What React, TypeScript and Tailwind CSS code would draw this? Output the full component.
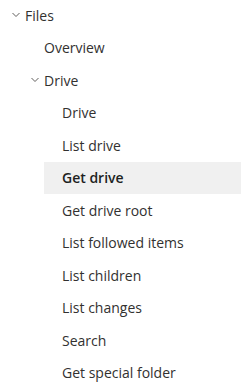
function Chevron() {
  return (
    <svg width="8" height="6" viewBox="0 0 8 6" className="shrink-0">
      <path d="M0.5 1 L4 4.5 L7.5 1" fill="none" stroke="#605e5c" strokeWidth="1" />
    </svg>
  );
}

function Row({
  label,
  indent,
  chevron,
  active,
}: {
  label: string;
  indent: string;
  chevron?: boolean;
  active?: boolean;
}) {
  return (
    <div className={`h-[32.5px] flex items-center ${indent}`}>
      {chevron ? (
        <div className="flex items-center gap-[5px]">
          <Chevron />
          <span>{label}</span>
        </div>
      ) : (
        <span>{label}</span>
      )}
    </div>
  );
}

export default function App() {
  const leaves = [
    "Drive",
    "List drive",
    "Get drive",
    "Get drive root",
    "List followed items",
    "List children",
    "List changes",
    "Search",
    "Get special folder",
  ];
  return (
    <div
      className="w-[241px] h-[389px] overflow-hidden bg-white text-[14px] text-[#323130]"
      style={{ fontFamily: '"Open Sans", sans-serif' }}
    >
      <div className="-mt-[1px] flex flex-col">
        <Row label="Files" indent="pl-[12px]" chevron />
        <Row label="Overview" indent="pl-[44px]" />
        <Row label="Drive" indent="pl-[31px]" chevron />
        <div className="ml-[44px] flex flex-col">
          {leaves.map((l) =>
            l === "Get drive" ? (
              <div
                key={l}
                className="h-[32.5px] flex items-center pl-[18px] bg-[#f0f0f0] font-semibold text-[#201f1e]"
              >
                {l}
              </div>
            ) : (
              <div key={l} className="h-[32.5px] flex items-center pl-[18px]">
                {l}
              </div>
            )
          )}
        </div>
      </div>
    </div>
  );
}
